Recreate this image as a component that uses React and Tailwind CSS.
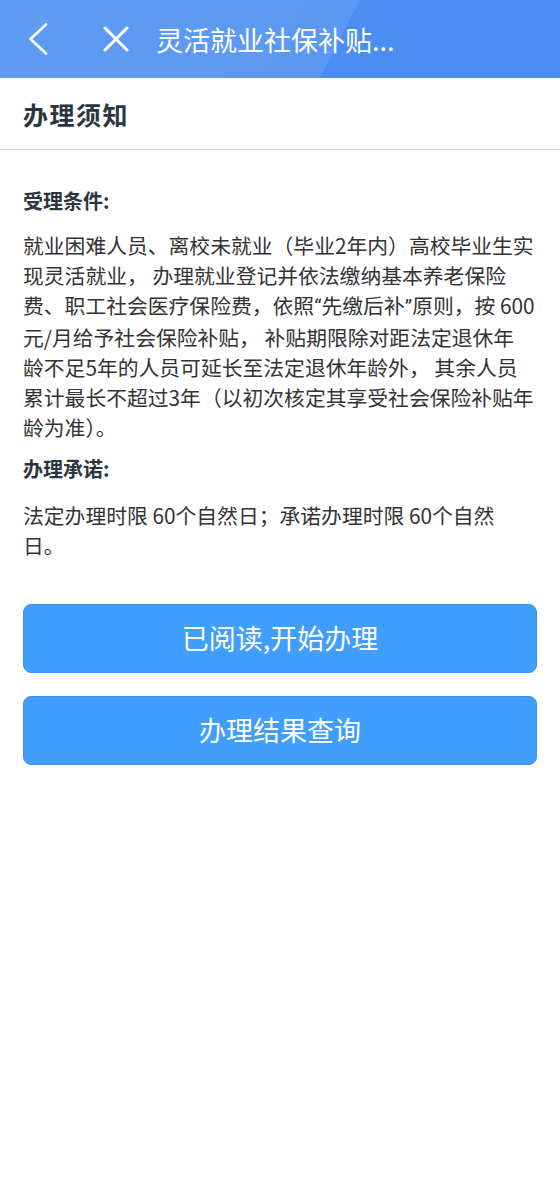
import React from "react";

const Q = ({ children }) => (
  <span className="font-['Roboto',sans-serif]">{children}</span>
);

export default function App() {
  const body1 = [
    "就业困难人员、离校未就业（毕业2年内）高校毕业生实",
    "现灵活就业， 办理就业登记并依法缴纳基本养老保险",
    <>
      费、职工社会医疗保险费，依照<Q>“</Q>先缴后补<Q>”</Q>原则，按 600
    </>,
    "元/月给予社会保险补贴， 补贴期限除对距法定退休年",
    "龄不足5年的人员可延长至法定退休年龄外， 其余人员",
    "累计最长不超过3年（以初次核定其享受社会保险补贴年",
    "龄为准）。",
  ];
  const body2 = ["法定办理时限 60个自然日；承诺办理时限 60个自然", "日。"];
  return (
    <div className="w-[560px] min-h-[1182px] bg-white font-['Noto_Sans_CJK_SC',sans-serif]">
      <div className="h-[78px] flex items-center pl-[28px] bg-[linear-gradient(117deg,#5f9cf3_0%,#5a98f2_60%,#4a8ef2_60%,#4a8ef2_100%)] text-white">
        <svg width="20" height="32" viewBox="0 0 20 32" fill="none">
          <path d="M18 1.5 L2.5 16 L18 30.5" stroke="white" strokeWidth="2.6" strokeLinecap="round" strokeLinejoin="round" />
        </svg>
        <svg className="ml-[55px]" width="26" height="26" viewBox="0 0 26 26" fill="none">
          <path d="M2 2 L24 24 M24 2 L2 24" stroke="white" strokeWidth="3" strokeLinecap="round" />
        </svg>
        <div className="ml-[27px] text-[27px] leading-none whitespace-nowrap">灵活就业社保补贴...</div>
      </div>

      <div className="h-[72px] flex items-center px-[23px] border-b border-[#d4d6d9]">
        <div className="text-[25px] font-bold text-[#2b3640] tracking-[1.5px] leading-none pt-[1px]">办理须知</div>
      </div>

      <div className="px-[23px] pt-[35px]">
        <div className="text-[20px] font-bold text-[#2b3640] leading-[31px]">受理条件:</div>
        <div className="mt-[14px] text-[20.8px] leading-[30px] text-[#333] whitespace-nowrap">
          {body1.map((l, i) => (
            <div key={i}>{l}</div>
          ))}
        </div>
        <div className="mt-[12px] text-[20px] font-bold text-[#2b3640] leading-[30px]">办理承诺:</div>
        <div className="mt-[16px] text-[20.8px] leading-[30px] text-[#333] whitespace-nowrap">
          {body2.map((l, i) => (
            <div key={i}>{l}</div>
          ))}
        </div>

        <div className="mt-[44px] flex flex-col gap-[23px]">
          <button className="h-[69px] w-full rounded-[8px] bg-[#409eff] border border-[#3b92ec] text-white text-[27px] flex items-center justify-center">
            已阅读,开始办理
          </button>
          <button className="h-[69px] w-full rounded-[8px] bg-[#409eff] border border-[#3b92ec] text-white text-[27px] flex items-center justify-center">
            办理结果查询
          </button>
        </div>
      </div>
    </div>
  );
}
